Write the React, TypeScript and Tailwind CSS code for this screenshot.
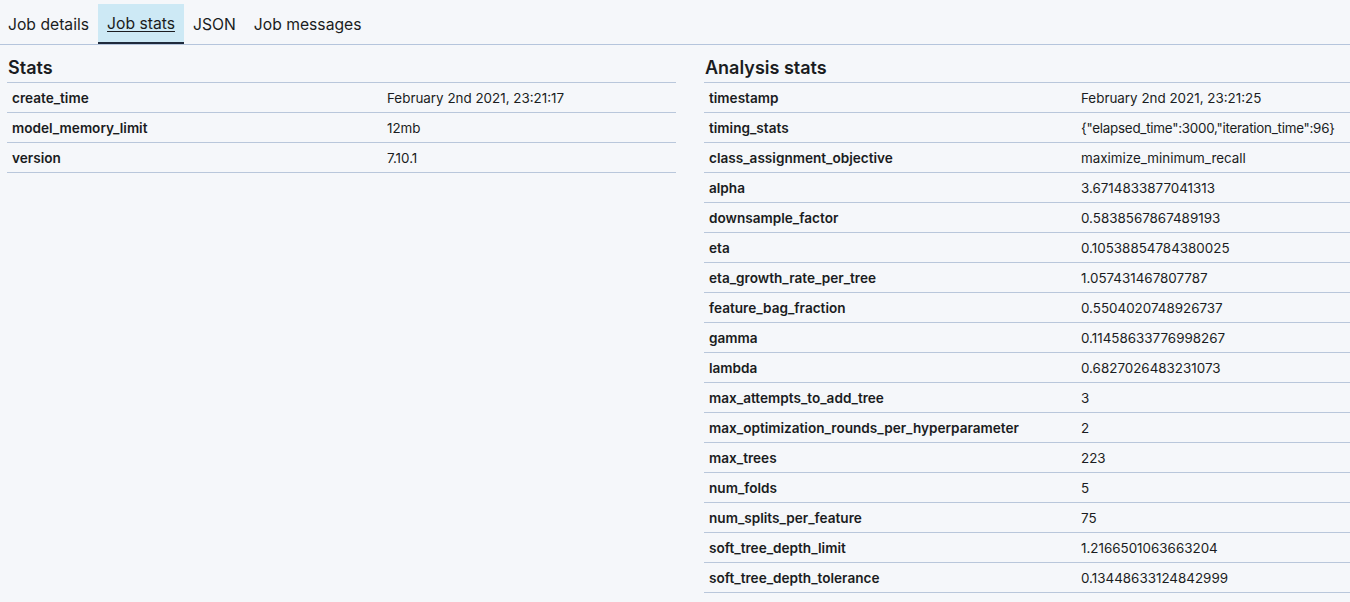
import React from "react";

const stats: [string, string][] = [
  ["create_time", "February 2nd 2021, 23:21:17"],
  ["model_memory_limit", "12mb"],
  ["version", "7.10.1"],
];

const analysis: [string, string][] = [
  ["timestamp", "February 2nd 2021, 23:21:25"],
  ["timing_stats", '{"elapsed_time":3000,"iteration_time":96}'],
  ["class_assignment_objective", "maximize_minimum_recall"],
  ["alpha", "3.6714833877041313"],
  ["downsample_factor", "0.5838567867489193"],
  ["eta", "0.10538854784380025"],
  ["eta_growth_rate_per_tree", "1.057431467807787"],
  ["feature_bag_fraction", "0.5504020748926737"],
  ["gamma", "0.11458633776998267"],
  ["lambda", "0.6827026483231073"],
  ["max_attempts_to_add_tree", "3"],
  ["max_optimization_rounds_per_hyperparameter", "2"],
  ["max_trees", "223"],
  ["num_folds", "5"],
  ["num_splits_per_feature", "75"],
  ["soft_tree_depth_limit", "1.2166501063663204"],
  ["soft_tree_depth_tolerance", "0.13448633124842999"],
];

function Table({
  title,
  rows,
  labelW,
}: {
  title: string;
  rows: [string, string][];
  labelW: string;
}) {
  return (
    <div className="flex flex-col">
      <div className="h-[37px] flex items-end pb-[5px] pl-[1px] text-[18px] font-semibold text-[#1a1c21] leading-none">
        {title}
      </div>
      <div className="border-t border-[#b9c7db]">
        {rows.map(([k, v]) => (
          <div key={k} className="flex h-[30px] items-center pt-[2px] border-b border-[#b9c7db] text-[#1a1c21]">
            <div className={`${labelW} pl-[5px] text-[13.6px] font-semibold shrink-0`}>{k}</div>
            <div className={`pl-[5px] text-[13.4px] whitespace-nowrap ${v.startsWith("{") ? "tracking-[-0.25px]" : ""}`}>{v}</div>
          </div>
        ))}
      </div>
    </div>
  );
}

export default function App() {
  return (
    <div
      className="w-[1350px] h-[602px] overflow-hidden bg-[#f5f7fa]"
      style={{ fontFamily: "Inter, 'Noto Sans', sans-serif" }}
    >
      <div className="flex h-[45px] border-b border-[#b5c5dc] pl-[8px] pt-[4px] text-[15.7px] text-[#1a1c21]">
        <div className="h-full flex items-center pt-[2px] pr-[9px]">Job details</div>
        <div className="h-full flex items-center pt-[2px] px-[9px] bg-[#cde9f5] border-b-2 border-[#1f2a3c]">
          <span className="underline underline-offset-2">Job stats</span>
        </div>
        <div className="h-full flex items-center pt-[2px] px-[9px]">JSON</div>
        <div className="h-full flex items-center pt-[2px] px-[9px]">Job messages</div>
      </div>
      <div className="flex pl-[7px]">
        <div className="w-[669px] shrink-0">
          <Table title="Stats" rows={stats} labelW="w-[375px]" />
        </div>
        <div className="ml-[28px] flex-1 min-w-0">
          <Table title="Analysis stats" rows={analysis} labelW="w-[372px]" />
        </div>
      </div>
    </div>
  );
}
